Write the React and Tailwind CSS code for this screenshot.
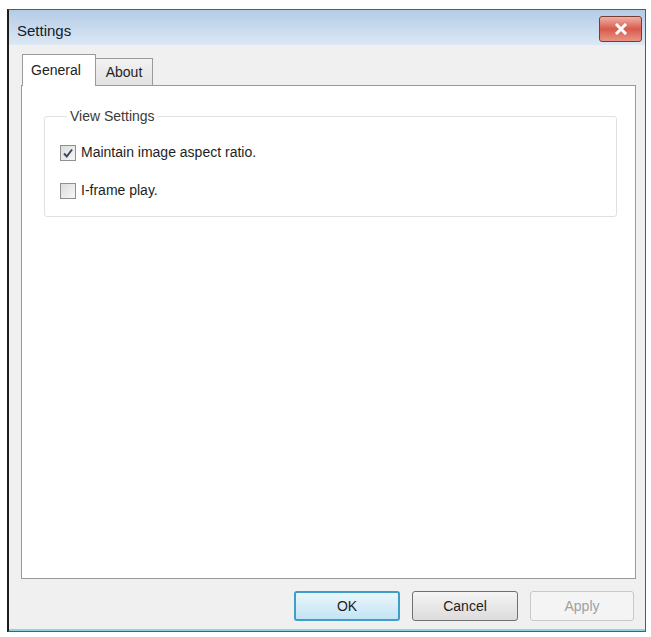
import React, { useState } from "react";

const font = { fontFamily: '"Liberation Sans", Arial, sans-serif' };

const Checkbox = ({ checked, onChange, label }) => (
  <label className="flex items-center gap-[5px] cursor-default select-none">
    <span
      onClick={onChange}
      className="w-[16px] h-[16px] border border-[#8f8f8f] bg-gradient-to-br from-[#dcdcdc] to-[#f7f7f7] flex items-center justify-center"
    >
      {checked && (
        <svg width="12" height="12" viewBox="0 0 12 12">
          <path d="M2 6.5 L4.8 9.5 L10 2.5" fill="none" stroke="#3b4a63" strokeWidth="2" />
        </svg>
      )}
    </span>
    <span className="text-[14px] text-[#1e1e1e]">{label}</span>
  </label>
);

const App = () => {
  const [aspect, setAspect] = useState(true);
  const [iframe, setIframe] = useState(false);

  return (
    <div className="w-[651px] h-[637px] bg-white pt-[9px] pl-[7px]" style={font}>
      <div className="w-[639px] h-[623px] border border-[#5a5a5a] border-l-[#1c1c1c] border-l-2 flex flex-col bg-[#f0f0f0]">
        {/* title bar */}
        <div className="h-[37px] flex items-start justify-between bg-gradient-to-b from-[#b3cce6] to-[#dce8f4] pl-[8px] pr-[3px]">
          <span className="text-[15px] text-[#10202e] mt-[10px]">Settings</span>
          <div className="mt-[6px] w-[43px] h-[26px] rounded-[3px] border border-[#7a3a32] bg-gradient-to-b from-[#eeb0a4] via-[#d65a4c] to-[#e89484] flex items-center justify-center">
            <svg width="14" height="12" viewBox="0 0 14 12">
              <path d="M2 1 L12 11 M12 1 L2 11" stroke="white" strokeWidth="3" />
            </svg>
          </div>
        </div>

        {/* client */}
        <div className="flex-1 flex flex-col pl-[12px] pr-[9px] pb-[8px] border-b-2 border-[#8fd3e0]">
          {/* tabs */}
          <div className="flex items-end mt-[8px] h-[32px]">
            <div className="h-[32px] w-[74px] ml-[1px] bg-white border border-b-0 border-[#9a9a9a] flex items-center pl-[8px] text-[14px] text-[#1e1e1e] relative top-[1px] z-10">
              General
            </div>
            <div className="h-[27px] w-[57px] bg-gradient-to-b from-[#f2f2f2] to-[#e2e2e2] border border-l-0 border-b-0 border-[#9a9a9a] flex items-center justify-center text-[14px] text-[#1e1e1e]">
              About
            </div>
          </div>

          {/* panel */}
          <div className="h-[494px] bg-white border border-[#9a9a9a] pt-[20px] pl-[22px] pr-[18px]">
            <fieldset className="border border-[#e0e0e0] rounded-[3px] h-[111px] px-[15px]">
              <legend className="px-[3px] ml-[7px] text-[14px] text-[#3a3a3a]">View Settings</legend>
              <div className="flex flex-col gap-[17px] mt-[15px]">
                <Checkbox checked={aspect} onChange={() => setAspect(!aspect)} label="Maintain image aspect ratio." />
                <Checkbox checked={iframe} onChange={() => setIframe(!iframe)} label="I-frame play." />
              </div>
            </fieldset>
          </div>

          {/* buttons */}
          <div className="flex justify-end gap-[12px] mt-[12px] pr-[2px]">
            <button className="w-[106px] h-[30px] rounded-[3px] border-2 border-[#3d9fc8] bg-gradient-to-b from-[#eaf6fc] to-[#c4e4f4] text-[14px] text-[#1e1e1e]">
              OK
            </button>
            <button className="w-[106px] h-[30px] rounded-[3px] border border-[#707070] bg-gradient-to-b from-[#f4f4f4] to-[#dcdcdc] text-[14px] text-[#1e1e1e]">
              Cancel
            </button>
            <button disabled className="w-[104px] h-[30px] rounded-[3px] border border-[#c8c8c8] bg-[#f4f4f4] text-[14px] text-[#a0a0a0]">
              Apply
            </button>
          </div>
        </div>
      </div>
    </div>
  );
};

export default App;
